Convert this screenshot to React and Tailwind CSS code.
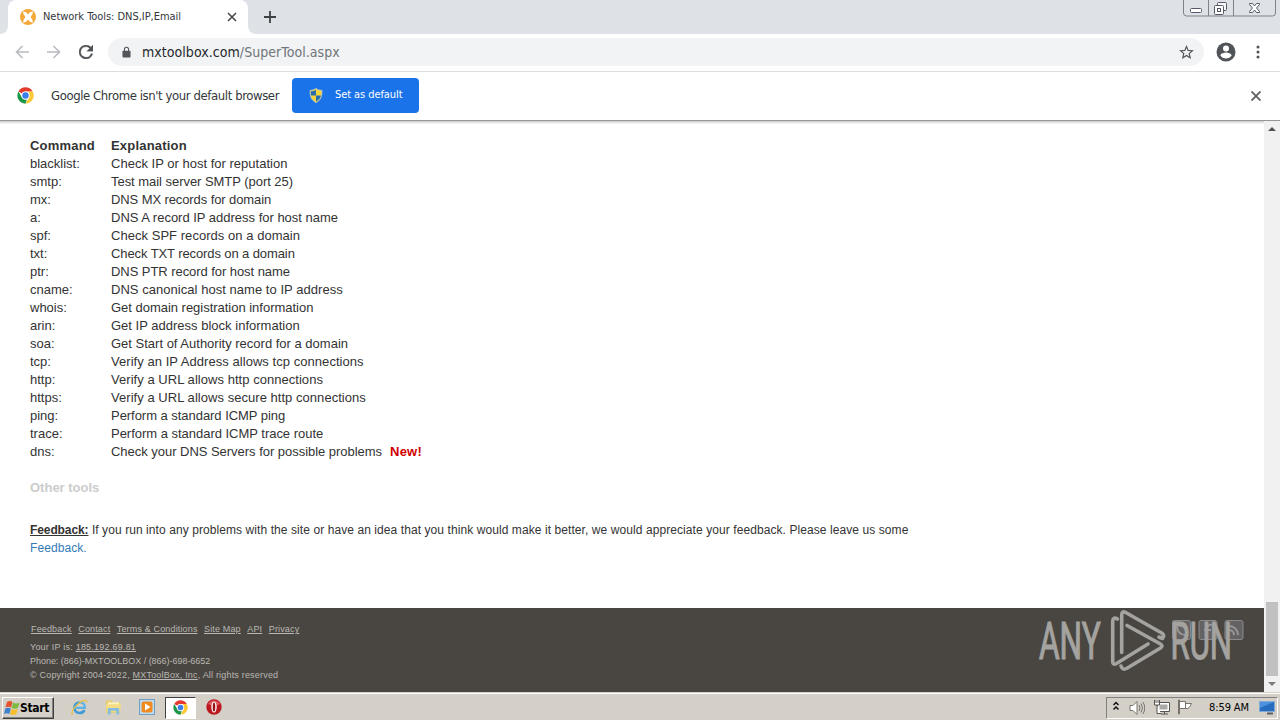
import React from "react";

const TAHOMA = "font-['DejaVu_Sans_Condensed','DejaVu_Sans',sans-serif]";

const commands = [
  ["blacklist:", "Check IP or host for reputation", "tracking-[0.01px]"],
  ["smtp:", "Test mail server SMTP (port 25)", "tracking-[-0.04px]"],
  ["mx:", "DNS MX records for domain", "tracking-[-0.1px]"],
  ["a:", "DNS A record IP address for host name", "tracking-[-0.01px]"],
  ["spf:", "Check SPF records on a domain", "tracking-[0.04px]"],
  ["txt:", "Check TXT records on a domain", "tracking-[-0.1px]"],
  ["ptr:", "DNS PTR record for host name", "tracking-[-0.06px]"],
  ["cname:", "DNS canonical host name to IP address", "tracking-[0.04px]"],
  ["whois:", "Get domain registration information", "tracking-[-0.02px]"],
  ["arin:", "Get IP address block information", "tracking-[0.01px]"],
  ["soa:", "Get Start of Authority record for a domain", "tracking-[0px]"],
  ["tcp:", "Verify an IP Address allows tcp connections", "tracking-[0.05px]"],
  ["http:", "Verify a URL allows http connections", "tracking-[0.04px]"],
  ["https:", "Verify a URL allows secure http connections", "tracking-[0.04px]"],
  ["ping:", "Perform a standard ICMP ping", "tracking-[-0.04px]"],
  ["trace:", "Perform a standard ICMP trace route", "tracking-[-0.02px]"],
  ["dns:", "Check your DNS Servers for possible problems", "tracking-[-0.03px]"],
];

function ChromeLogo({ className }) {
  return (
    <svg viewBox="0 0 48 48" className={className}>
      <circle cx="24" cy="24" r="23" fill="#fff" />
      <path d="M24 1a23 23 0 0 1 20 11.500H24a11.500 11.500 0 0 0-10 5.700L4.100 12.500A23 23 0 0 1 24 1z" fill="#e33b2e" />
      <path d="M44 12.500A23 23 0 0 1 24 47l10-17.300a11.500 11.500 0 0 0 0-11.400L30.500 12.500z" fill="#fcc934" />
      <path d="M4.100 12.500 14 29.700a11.500 11.500 0 0 0 14 5.100L24 47A23 23 0 0 1 4.100 12.500z" fill="#1e9648" />
      <circle cx="24" cy="24" r="11.500" fill="#fff" />
      <circle cx="24" cy="24" r="9" fill="#3b7de9" />
    </svg>
  );
}

function TabStrip() {
  return (
    <div className="flex h-[34px] justify-between bg-[#dee1e6]">
      <div className="flex">
        <div className="w-2 bg-white">
          <div className="h-full rounded-br-lg bg-[#dee1e6]" />
        </div>
        <div className="flex w-[240px] items-center rounded-t-lg bg-white pl-3 pr-[11px]">
          <svg viewBox="0 0 16 16" className="size-4 shrink-0">
            <circle cx="8" cy="8" r="8" fill="#f5a83a" />
            <path d="M3 2.500c3 0 3.500 1.200 5 3 1.500-1.800 2-3 5-3 0 2.500-1.400 3.800-2.400 5.500 1 1.700 2.400 3 2.400 5.500-3 0-3.500-1.200-5-3-1.500 1.800-2 3-5 3 0-2.500 1.400-3.800 2.400-5.500C4.400 6.300 3 5 3 2.500z" fill="#fff" />
          </svg>
          <span className={`ml-[7px] flex-1 whitespace-nowrap text-[11px] tracking-[-0.04px] text-[#33363a] ${TAHOMA}`}>
            Network Tools: DNS,IP,Email
          </span>
          <svg viewBox="0 0 10 10" className="size-[10px]" stroke="#45484c" strokeWidth="1.600">
            <path d="M1 1l8 8M9 1l-8 8" />
          </svg>
        </div>
        <div className="w-2 bg-white">
          <div className="h-full rounded-bl-lg bg-[#dee1e6]" />
        </div>
        <svg viewBox="0 0 12 12" className="ml-2 mt-[11px] size-3" stroke="#3c4043" strokeWidth="1.800">
          <path d="M6 0v12M0 6h12" />
        </svg>
      </div>
      <svg viewBox="0 0 94 17" className="mr-[3px] h-[17px] w-[94px]" fill="none" stroke="#7d828d">
        <path d="M.5 0v13q0 3 3 3h86q3 0 3-3V0M25.500 0v16M50.500 0v16" />
        <g stroke="#555a66">
          <rect x="7.500" y="8.500" width="11" height="4" rx="1" fill="#fff" />
          <rect x="34.500" y="2.500" width="9" height="8" rx="1" fill="#f5f6f8" />
          <rect x="31.500" y="5.500" width="9" height="9" rx="1" fill="#fff" />
          <rect x="34.500" y="8.500" width="3" height="3" />
          <path d="M66.500 3.500h3l2 2.500 2-2.500h3v1l-3 3.500 3 3.500v1h-3l-2-2.500-2 2.500h-3v-1l3-3.500-3-3.500z" fill="#fff" />
        </g>
      </svg>
    </div>
  );
}

function Toolbar() {
  return (
    <div className="flex h-[38px] items-center border-b border-[#dcdee0] bg-white pb-px">
      <svg viewBox="0 0 14 14" className="ml-[15px] size-[14px]" fill="none" stroke="#b9bbbe" strokeWidth="1.600">
        <path d="M14 7H1.500M7.500 1l-6 6 6 6" />
      </svg>
      <svg viewBox="0 0 14 14" className="ml-[18px] size-[14px]" fill="none" stroke="#b9bbbe" strokeWidth="1.600">
        <path d="M0 7h12.500M6.500 1l6 6-6 6" />
      </svg>
      <svg viewBox="4 4 16 16" className="ml-[18px] size-[14px]" fill="#505357" stroke="#505357" strokeWidth=".4">
        <path d="M17.650 6.350A7.960 7.960 0 0 0 12 4a8 8 0 1 0 7.730 10h-2.080A6 6 0 1 1 12 6c1.660 0 3.140.69 4.220 1.780L13 11h7V4z" />
      </svg>
      <div className="ml-[15px] flex h-7 w-[1096px] items-center rounded-full bg-[#f1f3f4] pl-[14px] pr-[10px]">
        <svg viewBox="0 0 10 12" className="h-3 w-[9px]">
          <rect x=".5" y="4.500" width="9" height="7.500" rx="1" fill="#53565a" />
          <path d="M2.700 5V3a2.300 2.300 0 0 1 4.600 0v2" fill="none" stroke="#53565a" strokeWidth="1.200" />
        </svg>
        <span className={`ml-[11px] flex-1 whitespace-nowrap text-[14px] tracking-[0.05px] text-[#707479] ${TAHOMA}`}>
          <span className="text-[#25282c]">mxtoolbox.com</span>/SuperTool.aspx
        </span>
        <svg viewBox="2 2 20 19" className="h-[14px] w-[15px]" fill="#505357">
          <path d="m22 9.240-7.190-.62L12 2 9.190 8.630 2 9.240l5.460 4.730L5.820 21 12 17.270 18.180 21l-1.630-7.030zM12 15.400l-3.760 2.270 1-4.280-3.320-2.880 4.380-.38L12 6.100l1.710 4.040 4.380.38-3.320 2.880 1 4.280z" />
        </svg>
      </div>
      <svg viewBox="0 0 20 20" className="ml-[12px] size-5">
        <circle cx="10" cy="10" r="9.500" fill="#505357" />
        <circle cx="10" cy="6.500" r="3" fill="#fff" />
        <path d="M4.300 13.500c.6-2 4-2.900 5.700-2.900s5.100.9 5.700 2.900A6.900 6.900 0 0 1 10 16.500a6.900 6.900 0 0 1-5.700-3z" fill="#fff" />
      </svg>
      <svg viewBox="0 0 4 14" className="ml-5 h-[14px] w-1" fill="#505357">
        <circle cx="2" cy="2" r="1.500" />
        <circle cx="2" cy="7" r="1.500" />
        <circle cx="2" cy="12" r="1.500" />
      </svg>
    </div>
  );
}

function InfoBar() {
  return (
    <div className="flex h-[49px] items-center border-b border-[#969696] bg-white pb-px pl-[17px] pr-[19px]">
      <ChromeLogo className="size-[17px]" />
      <span className={`ml-[17px] w-[241px] whitespace-nowrap text-[13px] tracking-[-0.41px] text-[#34373a] ${TAHOMA}`}>
        Google Chrome isn't your default browser
      </span>
      <div className="flex h-[35px] w-[127px] items-center rounded bg-[#1a73e8] pl-[17px]">
        <svg viewBox="0 0 14 16" className="h-[15px] w-[14px]">
          <path d="M7 .5C9 2 11 2.500 13.300 2.500 13.500 9 12 13 7 15.500 2 13 .5 9 .7 2.500 3 2.500 5 2 7 .5z" fill="#f7d33d" stroke="#b7c7c8" />
          <path d="M7 2v6H1.700Q1.400 6 1.500 3.500 5 3.300 7 2zM7 8h5.300Q11.500 12 7 14.500z" fill="#286cb0" />
        </svg>
        <span className={`ml-3 whitespace-nowrap text-[11px] tracking-[-0.08px] text-white ${TAHOMA}`}>Set as default</span>
      </div>
      <svg viewBox="0 0 10 10" className="ml-auto mt-px size-[10px]" stroke="#5c5f63" strokeWidth="1.800">
        <path d="M.5.5l9 9M9.500.5l-9 9" />
      </svg>
    </div>
  );
}

function Watermark() {
  return (
    <svg viewBox="0 0 206 64" className="absolute right-5 top-0 h-16 w-[206px] overflow-visible">
      <g fill="#706e72" stroke="#8b8a8e" fillOpacity=".7">
        <rect x="134.500" y="12.500" width="18" height="19" rx="2" />
        <rect x="161" y="12.500" width="18" height="19" rx="2" />
        <rect x="187" y="12.500" width="18" height="19" rx="2" />
      </g>
      <g fill="none" stroke="#98979a" strokeWidth="2">
        <path d="M191 18a9 9 0 0 1 9 9M191 22a5 5 0 0 1 5 5M139 19q1 8 9 8M174 17q-5-1-5 4v8M166 22h7" />
      </g>
      <g fill="#a4a3a0" stroke="#a4a3a0" strokeWidth="1.200" fontFamily="Roboto, sans-serif" fontSize="51">
        <text transform="translate(1 51) scale(.62 1)">ANY</text>
        <text transform="translate(132.500 51) scale(.61 1)">RUN</text>
      </g>
      <g fill="none" stroke="#a4a3a0" strokeWidth="3.600" strokeLinecap="round" strokeLinejoin="round">
        <path d="M83.700 44.500V7q0-4.500 4-2.500l36 20.500q3.500 2.500.8 5.500l-3.500-1.500" />
        <path d="M79.500 11q-4.800-2.500-4.800 2.500v40q0 4 3.800 2L110 36" />
        <path d="M89 17.500 122.500 36q3 2 0 4L88.500 60.500q-4 2-5.500-2.500" />
      </g>
    </svg>
  );
}

function PageFooter() {
  return (
    <footer className="relative h-[84px] bg-[#494641] pl-[30px] pt-[14px] font-['Liberation_Sans',sans-serif] text-[9px] leading-[14px] text-[#b9b7b3]">
      <div className="flex gap-[6.500px] pl-px tracking-[0.15px]">
        <a className="underline">Feedback</a>
        <a className="underline">Contact</a>
        <a className="underline">Terms &amp; Conditions</a>
        <a className="underline">Site Map</a>
        <a className="underline">API</a>
        <a className="underline">Privacy</a>
      </div>
      <div className="mt-1 tracking-[0.22px]">
        Your IP is: <a className="underline">185.192.69.81</a>
      </div>
      <div className="tracking-[-0.03px]">Phone: (866)-MXTOOLBOX / (866)-698-6652</div>
      <div className="tracking-[0.19px]">
        © Copyright 2004-2022, <a className="underline">MXToolBox, Inc</a>, All rights reserved
      </div>
      <Watermark />
    </footer>
  );
}

function Page() {
  return (
    <div className="flex h-[571px] bg-white font-['Liberation_Sans',sans-serif]">
      <main className="flex w-[1264px] flex-col">
        <div className="h-[3px] bg-linear-to-b from-[#c9c9c9] to-white" />
        <div className="flex-1 pl-[30px] pt-[13px] text-[13px] leading-[18px] text-[#333]">
          <div className="flex font-bold">
            <span className="w-[81px] tracking-[0.2px]">Command</span>
            <span className="tracking-[0.2px]">Explanation</span>
          </div>
          {commands.map(([name, text, spacing]) => (
            <div key={name} className="flex whitespace-nowrap">
              <span className="w-[81px]">{name}</span>
              <span className={spacing}>{text}</span>
              {name === "dns:" && <b className="ml-2 tracking-[0.2px] text-[#d00000]">New!</b>}
            </div>
          ))}
          <div className="mt-[18px] font-bold text-[#ccc]">Other tools</div>
          <p className="mt-6 w-[890px] text-[12px] tracking-[0.08px]">
            <b className="tracking-[-0.1px] underline">Feedback:</b> If you run into any problems with the site or have an idea that you think would make it better, we would appreciate your feedback. Please leave us some
            <br />
            <a className="text-[#337ab7]">Feedback.</a>
          </p>
        </div>
        <PageFooter />
      </main>
      <div className="flex w-4 flex-col items-center bg-[#f1f1f1]">
        <svg viewBox="0 0 16 17" className="h-[17px] w-4" fill="#505050">
          <path d="M4 10l4-4 4 4z" />
        </svg>
        <div className="mt-[464px] h-[74px] w-3 bg-[#c1c1c1]" />
        <svg viewBox="0 0 16 16" className="h-4 w-4" fill="#7b7b7b">
          <path d="M4 6h8l-4 4z" />
        </svg>
      </div>
    </div>
  );
}

function WindowsFlag() {
  return (
    <svg viewBox="0 0 16 16" className="size-4 shrink-0">
      <path d="M3 2q3-2 5.500 0L7 7.500Q4.500 6 1.500 7.500z" fill="#e5532d" />
      <path d="M9 2.500q3 2 6.500 0L14 8q-3.500 1.500-6.300 0z" fill="#7dbb42" />
      <path d="M1.300 8.500q3-1.500 5.500 0L5.300 14Q3 12.500 0 14z" fill="#3c82cf" />
      <path d="M7.500 9q3 1.500 6.300 0l-1.500 5q-3 2-6.300 0z" fill="#f8bd2b" />
    </svg>
  );
}

function Taskbar() {
  return (
    <div className={`flex h-7 items-center border-t border-[#d4d0c8] bg-[#d4d0c8] shadow-[inset_0_1px_0_#fff] ${TAHOMA}`}>
      <div className="ml-[2px] mt-[2px] flex h-[22px] w-[52px] items-center border border-b-[#404040] border-l-white border-r-[#404040] border-t-white pl-px shadow-[inset_-1px_-1px_0_#808080]">
        <WindowsFlag />
        <span className="mt-px text-[12px] font-bold tracking-[-0.3px] text-black">Start</span>
      </div>
      <svg viewBox="0 0 16 16" className="ml-[17px] mt-px size-[17px]">
        <path d="M8.200 3.200c-3 0-5 2-5 5s2 5 5 5c2 0 3.700-1 4.500-2.700" fill="none" stroke="#3d9bd8" strokeWidth="2.400" />
        <path d="M4 8.300h9.200C13 5 11.200 3.200 8.200 3.200" fill="none" stroke="#5fb4e6" strokeWidth="2" />
        <path d="M1.500 14.500C-1 12.500 5 4.500 10.500 2c3-1.400 4.500-.7 4 1.500" fill="none" stroke="#e9bd42" strokeWidth="1.200" />
      </svg>
      <svg viewBox="0 0 18 16" className="ml-[17px] mt-px h-[16px] w-[17px]">
        <path d="M1 1h6l1 2h8v11H1z" fill="#e9cb68" />
        <path d="M3 3h12v6H3z" fill="#fbf2bd" />
        <path d="M1 5h16l-1 8H2z" fill="#f5dc85" />
        <path d="M3 16V9h12v7h-3v-4H6v4z" fill="#84bde0" />
      </svg>
      <svg viewBox="0 0 16 16" className="ml-[17px] mt-px size-4">
        <rect x=".5" y=".5" width="15" height="15" fill="#bfdbef" stroke="#6f9fc2" />
        <rect x="2.500" y="2.500" width="11" height="11" rx="2" fill="#f08b1f" />
        <path d="M6 4.500 11.500 8 6 11.500z" fill="#fff" />
      </svg>
      <div className="ml-[10px] mt-[2px] flex h-[22px] w-[31px] items-center justify-center border border-b-white border-l-[#404040] border-r-white border-t-[#404040] bg-white">
        <ChromeLogo className="size-[15px]" />
      </div>
      <svg viewBox="0 0 16 16" className="ml-[10px] mt-px size-4">
        <circle cx="8" cy="8" r="7.700" fill="#bc1820" />
        <path d="M2 5a7 7 0 0 1 12 0q-6 3-12 0z" fill="#df5a5d" />
        <ellipse cx="8" cy="8" rx="2.700" ry="5.500" fill="#fff" />
        <ellipse cx="8" cy="8" rx="1.300" ry="4.600" fill="#9e1117" />
      </svg>
      <div className="ml-auto mr-[2px] mt-[2px] flex h-[22px] w-[172px] items-center border border-b-white border-l-[#808080] border-r-white border-t-[#808080]">
        <svg viewBox="0 0 8 10" className="-mt-1 ml-[5px] h-[10px] w-2" fill="none" stroke="#111" strokeWidth="1.500">
          <path d="M1.500 4 4 1.500 6.500 4M1.500 8.500 4 6l2.500 2.500" />
        </svg>
        <svg viewBox="0 0 16 16" className="ml-[9px] size-4" fill="none" stroke="#77746e">
          <path d="M1 5.500h3l4-4v13l-4-4H1z" fill="#fff" />
          <path d="M10 5q2 3 0 6M12 3.500q3 4.500 0 9M14 2q3.500 6 0 12" />
        </svg>
        <svg viewBox="0 0 17 16" className="-mt-px ml-2 h-4 w-[17px]" fill="none" stroke="#55534f">
          <path d="M4.500 3.500h12v9H4.500z" fill="#fff" />
          <path d="M6.500 5.500h8v5h-8z" fill="#aaa9a5" stroke="none" />
          <path d="M8 15h7M11.500 12.500V15" />
          <path d="M1.500 1v5h5V1M3 1v3M5 1v3M4 6v8.500h4" fill="#fff" />
        </svg>
        <svg viewBox="0 0 16 16" className="-mt-px ml-[7px] size-4" fill="#fff" stroke="#77746e">
          <path d="M1.500 1v14h1V1zM2.500 2.500h6v7h-6zM8.500 4.500h6l-1.500 3q-2 3-4.500 2z" />
        </svg>
        <span className="ml-4 mt-px whitespace-nowrap text-[11px] tracking-[-0.1px] text-black">8:59 AM</span>
        <svg viewBox="0 0 16 14" className="ml-auto mr-[2px] h-[14px] w-4">
          <rect x=".5" y=".5" width="15" height="10" fill="#286cc0" stroke="#80a9d5" />
          <path d="M1 1h14L1 7z" fill="#4c91df" />
          <path d="M8 12.500h6" stroke="#5b6066" strokeWidth="2" />
        </svg>
      </div>
    </div>
  );
}

export default function App() {
  return (
    <div className="flex h-[720px] w-[1280px] flex-col overflow-hidden bg-white">
      <TabStrip />
      <Toolbar />
      <InfoBar />
      <Page />
      <Taskbar />
    </div>
  );
}
